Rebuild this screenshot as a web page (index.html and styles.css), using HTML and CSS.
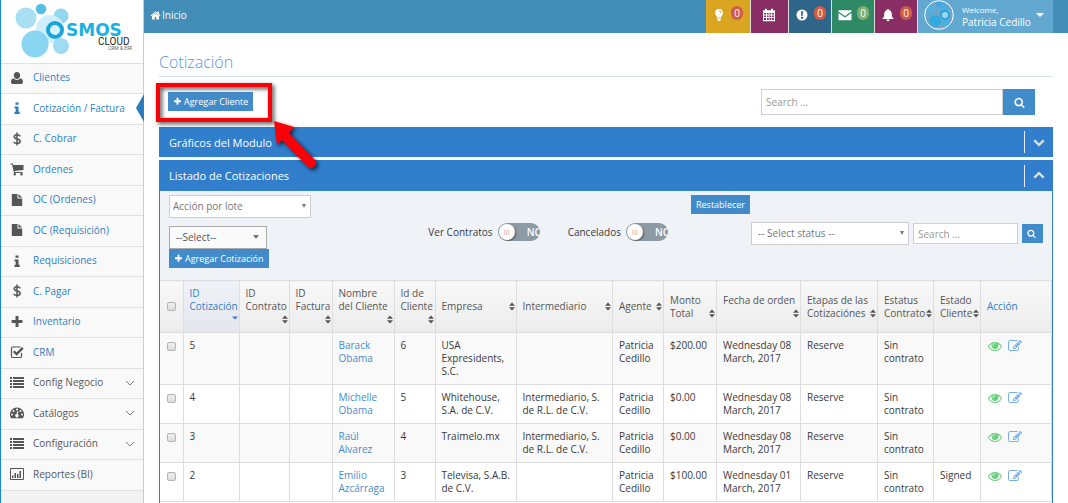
FILE: index.html
```html
<!DOCTYPE html>
<html lang="es">

<head>
  <meta charset="UTF-8">
  <meta name="viewport" content="width=device-width, initial-scale=1.0">
  <title>Cotización - Osmos Cloud</title>
  <link rel="stylesheet" href="styles.css">
</head>

<body>
  <svg class="sprite" aria-hidden="true">
    <symbol id="plus" viewBox="0 0 1792 1792"><path d="M1600 736v192q0 40-28 68t-68 28h-416v416q0 40-28 68t-68 28h-192q-40 0-68-28t-28-68v-416h-416q-40 0-68-28t-28-68v-192q0-40 28-68t68-28h416v-416q0-40 28-68t68-28h192q40 0 68 28t28 68v416h416q40 0 68 28t28 68z"/></symbol>
    <symbol id="search" viewBox="0 0 1792 1792"><path d="M1216 832q0-185-131.5-316.5t-316.5-131.5-316.5 131.5-131.5 316.5 131.5 316.5 316.5 131.5 316.5-131.5 131.5-316.5zm512 832q0 52-38 90t-90 38q-54 0-90-38l-343-342q-179 124-399 124-143 0-273.5-55.5t-225-150-150-225-55.5-273.5 55.5-273.5 150-225 225-150 273.5-55.5 273.5 55.5 225 150 150 225 55.5 273.5q0 220-124 399l343 343q37 37 37 90z"/></symbol>
    <symbol id="chevron" viewBox="0 0 1792 1792"><path d="M1683 808l-742 741q-19 19-45 19t-45-19l-742-741q-19-19-19-45.5t19-45.5l166-165q19-19 45-19t45 19l531 531 531-531q19-19 45-19t45 19l166 165q19 19 19 45.5t-19 45.5z"/></symbol>
    <symbol id="edit" viewBox="0 0 1792 1792"><path d="M888 1184l116-116-152-152-116 116v56h96v96h56zm440-720q-16-16-33 1l-350 350q-17 17-1 33t33-1l350-350q17-17 1-33zm80 594v190q0 119-84.5 203.5t-203.5 84.5h-832q-119 0-203.5-84.5t-84.5-203.5v-832q0-119 84.5-203.5t203.5-84.5h832q63 0 117 25 15 7 18 23 3 17-9 29l-49 49q-14 14-32 8-23-6-45-6h-832q-66 0-113 47t-47 113v832q0 66 47 113t113 47h832q66 0 113-47t47-113v-126q0-13 9-22l64-64q15-15 35-7t20 29zm-96-738l288 288-672 672h-288v-288zm444 132l-92 92-288-288 92-92q28-28 68-28t68 28l152 152q28 28 28 68t-28 68z"/></symbol>
    <symbol id="eye" viewBox="0 0 1792 1792"><path d="M1664 960q-152-236-381-353 61 104 61 225 0 185-131.5 316.5t-316.5 131.5-316.5-131.5-131.5-316.5q0-121 61-225-229 117-381 353 133 205 333.5 326.5t434.5 121.5 434.5-121.5 333.5-326.5zm-720-384q0-20-14-34t-34-14q-125 0-214.5 89.5t-89.5 214.5q0 20 14 34t34 14 34-14 14-34q0-86 61-147t147-61q20 0 34-14t14-34zm848 384q0 34-20 69-140 230-376.5 368.5t-499.5 138.5-499.5-139-376.5-368q-20-35-20-69t20-69q140-229 376.5-368t499.5-139 499.5 139 376.5 368q20 35 20 69z"/></symbol>
    <symbol id="home" viewBox="0 0 1792 1792"><path d="M1472 992v480q0 26-19 45t-45 19h-384v-384h-256v384h-384q-26 0-45-19t-19-45v-480q0-1 .5-3t.5-3l575-474 575 474q1 2 1 6zm223-69l-62 74q-8 9-21 11h-3q-13 0-21-7l-692-577-692 577q-12 8-24 7-13-2-21-11l-62-74q-8-10-7-23.5t11-21.5l719-599q32-26 76-26t76 26l244 204v-195q0-14 9-23t23-9h192q14 0 23 9t9 23v408l219 182q10 8 11 21.5t-7 23.5z"/></symbol>
    <symbol id="user" viewBox="0 0 14 14"><path d="M7 1c2 0 3.200 1.400 3.200 3.300S9 8 7 8 3.800 6.200 3.800 4.300 5 1 7 1zM3.600 7.300C4.600 8.400 5.700 9 7 9s2.400-.6 3.400-1.700c1.800.4 2.600 1.900 2.600 4 0 1-.8 1.700-1.800 1.700H2.800C1.800 13 1 12.300 1 11.300c0-2.100.8-3.600 2.600-4z"/></symbol>
    <symbol id="info" viewBox="0 0 14 14"><path d="M5.500 1.500h3v2.300h-3zM4.500 5.500h4v5.300h1.200V13H4.500v-2.200h1.200V7.500H4.500z"/></symbol>
    <symbol id="dollar" viewBox="0 0 14 14"><path d="M10.300 4.200C9.500 3.200 8.300 2.800 7 2.800c-1.700 0-2.800.8-2.800 2 0 3 6 1.400 6 4.500 0 1.300-1.200 2.100-3 2.100-1.500 0-2.700-.5-3.600-1.500M7 .5v13" fill="none" stroke="currentColor" stroke-width="1.500"/></symbol>
    <symbol id="cart" viewBox="0 0 14 14"><path d="M.5 1.500h2.300l.4 1.500h10.300v5L4.600 9l.2 1h7.700v1H4L2 2.500H.5z"/><circle cx="4.800" cy="12.300" r="1.200"/><circle cx="11.500" cy="12.300" r="1.200"/></symbol>
    <symbol id="file" viewBox="0 0 14 14"><path d="M1.800 1h5.700v4.500h4.700V13H1.800zM8.500 1l3.700 3.500H8.500z"/></symbol>
    <symbol id="check" viewBox="0 0 14 14"><path d="M11.500 8v3.200c0 .8-.6 1.300-1.300 1.300H2.800c-.8 0-1.300-.6-1.300-1.300V3.300c0-.8.6-1.300 1.300-1.300h7.700" fill="none" stroke="currentColor" stroke-width="1.200"/><path d="M3.800 6.300l2.800 2.800 6.200-6.200" fill="none" stroke="currentColor" stroke-width="2.300"/></symbol>
    <symbol id="list" viewBox="0 0 14 14"><path d="M0 1h2v2H0zM3 1h11v2H3zM0 4h2v2H0zM3 4h11v2H3zM0 7h2v2H0zM3 7h11v2H3zM0 10h2v2H0zM3 10h11v2H3z"/></symbol>
    <symbol id="gauge" viewBox="0 0 14 14"><path fill-rule="evenodd" d="M7 1.500a7 7 0 0 1 5.900 10.700H1.100A7 7 0 0 1 7 1.500zM7 2.500a1 1 0 1 0 0 2 1 1 0 0 0 0-2zM3.500 4a1 1 0 1 0 0 2 1 1 0 0 0 0-2zM10.500 4a1 1 0 1 0 0 2 1 1 0 0 0 0-2zM2 7.500a1 1 0 1 0 0 2 1 1 0 0 0 0-2zM12 7.500a1 1 0 1 0 0 2 1 1 0 0 0 0-2zM7.500 5l-1 3a1.700 1.700 0 1 0 1.300.2l.7-2.900z"/></symbol>
    <symbol id="chart" viewBox="0 0 14 14"><path d="M.5 1.500h13v11H.5z" fill="none" stroke="currentColor"/><path d="M2 8.500h1.500V11H2zM4.500 6H6v5H4.500zM7 7h1.500v4H7zM9.500 4H11v7H9.500z"/></symbol>
    <symbol id="bulb" viewBox="0 0 14 14"><path fill-rule="evenodd" d="M7 1a3.900 3.900 0 0 1 3.900 3.900c0 1.900-1.500 2.600-1.700 4H4.800c-.2-1.400-1.700-2.100-1.700-4A3.900 3.900 0 0 1 7 1zM7 2.600v1c.8 0 1.300.5 1.400 1.200h.9C9.300 3.500 8.300 2.600 7 2.600z"/><path d="M5 9.500h4v1.200H5zM5 11.300h4l-1 1.700H6z"/></symbol>
    <symbol id="calendar" viewBox="0 0 14 14"><path fill-rule="evenodd" d="M1 2.300h2V.8h2v1.500h4V.8h2v1.500h2V13.200H1zM2 5v1.500h2V5zM5 5v1.500h1.700V5zM7.500 5v1.500h1.700V5zM10 5v1.500h2V5zM2 7.500V9h2V7.500zM5 7.500V9h1.700V7.500zM7.500 7.500V9h1.700V7.500zM10 7.500V9h2V7.500zM2 10v2h2v-2zM5 10v2h1.700v-2zM7.500 10v2h1.700v-2zM10 10v2h2v-2z"/></symbol>
    <symbol id="alert" viewBox="0 0 14 14"><path fill-rule="evenodd" d="M7 1.500a5.500 5.500 0 1 1 0 11 5.500 5.500 0 0 1 0-11zM6 3.200l.3 4.700h1.400L8 3.200zM6 8.800v1.900h2V8.800z"/></symbol>
    <symbol id="mail" viewBox="0 0 14 14"><path d="M.5 2.300h13v1.200L7 8 .5 3.500zM.5 5L7 9.500 13.500 5v7.200H.5z"/></symbol>
    <symbol id="bell" viewBox="0 0 14 14"><path d="M6.300 1h1.400v1C10 2.500 10.800 4.200 10.800 6c0 2.700.8 4 2.200 5H1c1.400-1 2.200-2.300 2.200-5 0-1.800.8-3.500 3.100-4zM5.300 11.500h3.400a1.700 1.700 0 0 1-3.400 0z"/></symbol>
    <symbol id="sort" viewBox="0 0 6 8"><path d="M0 3.300L3 0l3 3.300zM0 4.700h6L3 8z"/></symbol>
    <symbol id="sort-down" viewBox="0 0 6 8"><path d="M0 1h6L3 4z"/></symbol>
  </svg>

  <div class="layout">
    <aside class="sidebar">
      <a class="logo" href="#" aria-label="Osmos Cloud">
        <svg width="118" height="58" viewBox="0 0 118 58">
          <circle cx="12" cy="15" r="10.500" fill="#a9dff3"/>
          <circle cx="27" cy="6" r="5.300" fill="#56bfe3"/>
          <circle cx="47" cy="13" r="7.500" fill="#93d8f0"/>
          <circle cx="36" cy="26" r="14" fill="#cdeefa"/>
          <circle cx="47" cy="43" r="8" fill="#9fdcf2"/>
          <circle cx="21" cy="41" r="13.500" fill="#7dd0ef" opacity=".9"/>
          <circle cx="41" cy="27" r="7" fill="#d9f2fb" stroke="#1ba4dc" stroke-width="4"/>
          <text class="logo-name" x="52" y="33">SMOS</text>
          <text class="logo-cloud" x="84" y="42">CLOUD</text>
          <text class="logo-small" x="94" y="47">CRM &amp; ERP</text>
        </svg>
      </a>
      <nav>
        <ul class="menu">
          <li><a href="#"><svg class="icon"><use href="#user"/></svg>Clientes</a></li>
          <li class="active"><a href="#"><svg class="icon"><use href="#info"/></svg>Cotización / Factura</a></li>
          <li><a href="#"><svg class="icon"><use href="#dollar"/></svg>C. Cobrar</a></li>
          <li><a href="#"><svg class="icon"><use href="#cart"/></svg>Ordenes</a></li>
          <li><a href="#"><svg class="icon"><use href="#file"/></svg>OC (Ordenes)</a></li>
          <li><a href="#"><svg class="icon"><use href="#file"/></svg>OC (Requisición)</a></li>
          <li><a href="#"><svg class="icon"><use href="#info"/></svg>Requisiciones</a></li>
          <li><a href="#"><svg class="icon"><use href="#dollar"/></svg>C. Pagar</a></li>
          <li><a href="#"><svg class="icon"><use href="#plus"/></svg>Inventario</a></li>
          <li><a href="#"><svg class="icon"><use href="#check"/></svg>CRM</a></li>
          <li class="group"><a href="#"><svg class="icon"><use href="#list"/></svg>Config Negocio<svg class="arrow" viewBox="0 0 10 10"><path d="M1 3l4 4 4-4"/></svg></a></li>
          <li class="group"><a href="#"><svg class="icon"><use href="#gauge"/></svg>Catálogos<svg class="arrow" viewBox="0 0 10 10"><path d="M1 3l4 4 4-4"/></svg></a></li>
          <li class="group"><a href="#"><svg class="icon"><use href="#list"/></svg>Configuración<svg class="arrow" viewBox="0 0 10 10"><path d="M1 3l4 4 4-4"/></svg></a></li>
          <li class="group"><a href="#"><svg class="icon"><use href="#chart"/></svg>Reportes (BI)</a></li>
        </ul>
      </nav>
    </aside>

    <div class="content">
      <header class="topbar">
        <a class="home" href="#"><svg><use href="#home"/></svg>Inicio</a>
        <div class="notices">
          <a class="notice yellow" href="#" aria-label="Ideas"><svg><use href="#bulb"/></svg><span class="badge">0</span></a>
          <a class="notice purple narrow" href="#" aria-label="Calendario"><svg><use href="#calendar"/></svg></a>
          <a class="notice blue" href="#" aria-label="Alertas"><svg><use href="#alert"/></svg><span class="badge">0</span></a>
          <a class="notice green" href="#" aria-label="Mensajes"><svg><use href="#mail"/></svg><span class="badge badge-green">0</span></a>
          <a class="notice purple" href="#" aria-label="Avisos"><svg><use href="#bell"/></svg><span class="badge">0</span></a>
          <a class="profile" href="#">
            <svg class="avatar" viewBox="0 0 30 30">
              <circle cx="15" cy="15" r="14" fill="#6fa5cb"/>
              <circle cx="6" cy="10" r="5" fill="#55aedb"/>
              <circle cx="15" cy="4" r="3" fill="#37a9dc"/>
              <circle cx="20" cy="9" r="5" fill="#4bade0"/>
              <circle cx="11" cy="21" r="6" fill="#35aade"/>
              <circle cx="22" cy="23" r="4" fill="#4bb0dd"/>
              <circle cx="21" cy="15" r="4" fill="#a4d7ef" stroke="#27a5dd" stroke-width="2"/>
              <circle cx="15" cy="15" r="14.300" fill="none" stroke="#fff" stroke-width="1"/>
            </svg>
            <span class="who"><small>Welcome,</small>Patricia Cedillo</span>
            <svg class="caret" viewBox="0 0 8 4"><path d="M0 0h8L4 4z"/></svg>
          </a>
        </div>
      </header>

      <main>
        <h1>Cotización</h1>

        <div class="actions">
          <div class="add-client">
            <button class="btn" type="button"><svg><use href="#plus"/></svg>Agregar Cliente</button>
            <svg class="callout" width="170" height="94" viewBox="0 0 170 94" aria-hidden="true">
              <rect x="4" y="4" width="112" height="35"/>
              <path d="M120 40l20 6-5 6 26 27a5 5 0 0 1-7 7l-26-27-5 5z"/>
            </svg>
          </div>
          <form class="search">
            <input type="text" placeholder="Search ..." aria-label="Buscar">
            <button type="button" aria-label="Buscar"><svg><use href="#search"/></svg></button>
          </form>
        </div>

        <section class="panel">
          <h2>Gráficos del Modulo<button class="toggle-panel" type="button" aria-label="Abrir"><svg><use href="#chevron"/></svg></button></h2>
        </section>

        <section class="panel open">
          <h2>Listado de Cotizaciones<button class="toggle-panel" type="button" aria-label="Cerrar"><svg><use href="#chevron"/></svg></button></h2>

          <div class="filters">
            <div class="batch">
              <span class="select"><select aria-label="Acción por lote"><option>Acción por lote</option></select></span>
              <span class="select select-type"><select aria-label="Tipo"><option>--Select--</option></select></span>
              <button class="btn" type="button"><svg><use href="#plus"/></svg>Agregar Cotización</button>
            </div>
            <div class="switches">
              <label class="switch">Ver Contratos<input type="checkbox"><span class="track"><i>III</i><b>NO</b></span></label>
              <label class="switch">Cancelados<input type="checkbox"><span class="track"><i>III</i><b>NO</b></span></label>
            </div>
            <div class="lookup">
              <button class="btn" type="button">Restablecer</button>
              <div class="lookup-row">
                <span class="select select-status"><select aria-label="Status"><option>-- Select status --</option></select></span>
                <input type="text" placeholder="Search ..." aria-label="Buscar cotización">
                <button class="btn btn-icon" type="button" aria-label="Buscar cotización"><svg><use href="#search"/></svg></button>
              </div>
            </div>
          </div>

          <table>
            <colgroup>
              <col class="w-check"><col class="w-quote"><col class="w-contract"><col class="w-bill"><col class="w-name"><col class="w-client"><col class="w-company"><col><col class="w-agent"><col class="w-amount"><col class="w-date"><col class="w-stage"><col class="w-status"><col class="w-state"><col class="w-action">
            </colgroup>
            <thead>
              <tr>
                <th class="check"><input type="checkbox" aria-label="Todos"></th>
                <th class="sorted">ID Cotización<svg><use href="#sort-down"/></svg></th>
                <th>ID Contrato<svg><use href="#sort"/></svg></th>
                <th>ID Factura<svg><use href="#sort"/></svg></th>
                <th>Nombre del Cliente<svg><use href="#sort"/></svg></th>
                <th>Id de Cliente<svg><use href="#sort"/></svg></th>
                <th>Empresa<svg><use href="#sort"/></svg></th>
                <th>Intermediario<svg><use href="#sort"/></svg></th>
                <th>Agente<svg><use href="#sort"/></svg></th>
                <th>Monto Total<svg><use href="#sort"/></svg></th>
                <th>Fecha de orden<svg><use href="#sort"/></svg></th>
                <th>Etapas de las Cotizaciónes<svg><use href="#sort"/></svg></th>
                <th>Estatus Contrato<svg><use href="#sort"/></svg></th>
                <th>Estado Cliente<svg><use href="#sort"/></svg></th>
                <th class="action">Acción</th>
              </tr>
            </thead>
            <tbody>
              <tr>
                <td class="check"><input type="checkbox" aria-label="Cotización 5"></td>
                <td>5</td><td></td><td></td>
                <td><a href="#">Barack Obama</a></td>
                <td>6</td>
                <td>USA Expresidents, S.C.</td>
                <td></td>
                <td>Patricia Cedillo</td>
                <td>$200.00</td>
                <td>Wednesday 08 March, 2017</td>
                <td>Reserve</td>
                <td>Sin contrato</td>
                <td></td>
                <td class="tools"><a class="view" href="#" aria-label="Ver"><svg><use href="#eye"/></svg></a><a class="edit" href="#" aria-label="Editar"><svg><use href="#edit"/></svg></a></td>
              </tr>
              <tr>
                <td class="check"><input type="checkbox" aria-label="Cotización 4"></td>
                <td>4</td><td></td><td></td>
                <td><a href="#">Michelle Obama</a></td>
                <td>5</td>
                <td>Whitehouse, S.A. de C.V.</td>
                <td>Intermediario, S. de R.L. de C.V.</td>
                <td>Patricia Cedillo</td>
                <td>$0.00</td>
                <td>Wednesday 08 March, 2017</td>
                <td>Reserve</td>
                <td>Sin contrato</td>
                <td></td>
                <td class="tools"><a class="view" href="#" aria-label="Ver"><svg><use href="#eye"/></svg></a><a class="edit" href="#" aria-label="Editar"><svg><use href="#edit"/></svg></a></td>
              </tr>
              <tr>
                <td class="check"><input type="checkbox" aria-label="Cotización 3"></td>
                <td>3</td><td></td><td></td>
                <td><a href="#">Raúl Alvarez</a></td>
                <td>4</td>
                <td>Traimelo.mx</td>
                <td>Intermediario, S. de R.L. de C.V.</td>
                <td>Patricia Cedillo</td>
                <td>$0.00</td>
                <td>Wednesday 08 March, 2017</td>
                <td>Reserve</td>
                <td>Sin contrato</td>
                <td></td>
                <td class="tools"><a class="view" href="#" aria-label="Ver"><svg><use href="#eye"/></svg></a><a class="edit" href="#" aria-label="Editar"><svg><use href="#edit"/></svg></a></td>
              </tr>
              <tr>
                <td class="check"><input type="checkbox" aria-label="Cotización 2"></td>
                <td>2</td><td></td><td></td>
                <td><a href="#">Emilio Azcárraga</a></td>
                <td>3</td>
                <td>Televisa, S.A.B. de C.V.</td>
                <td></td>
                <td>Patricia Cedillo</td>
                <td>$100.00</td>
                <td>Wednesday 01 March, 2017</td>
                <td>Reserve</td>
                <td>Sin contrato</td>
                <td>Signed</td>
                <td class="tools"><a class="view" href="#" aria-label="Ver"><svg><use href="#eye"/></svg></a><a class="edit" href="#" aria-label="Editar"><svg><use href="#edit"/></svg></a></td>
              </tr>
            </tbody>
          </table>
        </section>
      </main>
    </div>
  </div>
</body>

</html>
```
FILE: styles.css
```css
* {
  box-sizing: border-box;
}

body {
  margin: 0;
  font-family: 'Open Sans', sans-serif;
  font-size: 10px;
  line-height: 13px;
  color: #393939;
  background-color: #fff;
}

a {
  color: #4a8bcb;
  text-decoration: none;
}

svg {
  fill: currentColor;
  flex-shrink: 0;
}

button,
input,
select {
  font: inherit;
  border-radius: 0;
}

button {
  cursor: pointer;
}

.sprite {
  display: none;
}

.layout {
  display: flex;
  min-height: 100vh;
}

/* sidebar */
.sidebar {
  width: 144px;
  flex-shrink: 0;
  background-color: #f2f2f2;
  border-left: 1px solid #1c84d8;
  border-right: 1px solid #ccc;
}

.logo {
  display: block;
  height: 63px;
  padding: 3px 13px 0;
  background-color: #fff;
}

.logo-name {
  font: bold 17px 'DejaVu Sans', sans-serif;
  fill: #1bb0e4;
}

.logo-cloud {
  font: 10px Roboto, sans-serif;
  fill: #222;
}

.logo-small {
  font: 5px Roboto, sans-serif;
  fill: #666;
}

.menu {
  margin: 0;
  padding: 0;
  list-style: none;
  border-bottom: 1px solid #e0e0e0;
}

.menu li {
  height: 30px;
  border-top: 1px solid #e0e0e0;
  background-color: #f9f9f9;
}

.menu li:nth-child(even) {
  height: 31px;
}

.menu a {
  display: flex;
  align-items: center;
  gap: 9px;
  height: 100%;
  padding: 0 8px 2px 9px;
  font-weight: 500;
  color: #2f7fc4;
}

.menu .icon {
  width: 14px;
  height: 14px;
  color: #555;
}

.menu .group a {
  font-weight: 400;
  color: #585858;
}

.menu .arrow {
  width: 10px;
  height: 10px;
  margin-left: auto;
  fill: none;
  stroke: #777;
}

.menu .active {
  position: relative;
  background-color: #fff;
}

.menu .active .icon {
  color: #2b7dbc;
}

.menu .active::after {
  content: "";
  position: absolute;
  top: 0;
  right: -1px;
  border: 14px solid transparent;
  border-left-width: 0;
  border-right: 8px solid #2b7dbc;
}

/* top bar */
.content {
  flex: 1;
  min-width: 0;
  display: flex;
  flex-direction: column;
}

.topbar {
  display: flex;
  justify-content: space-between;
  height: 33px;
  padding: 0 15px 0 6px;
  background-color: #438eb9;
}

.home {
  display: flex;
  align-items: center;
  gap: 1px;
  padding-bottom: 2px;
  color: #fff;
}

.home svg {
  width: 11px;
  height: 11px;
}

.notices {
  display: flex;
}

.notice {
  display: flex;
  gap: 5px;
  width: 43px;
  padding: 8px 0 0 6px;
  border-left: 1px solid #ddd;
  color: #fff;
}

.notice:first-child {
  width: 44px;
  border-left: 0;
}

.notice svg {
  width: 14px;
  height: 14px;
}

.narrow {
  width: 38px;
  padding-left: 11px;
}

.yellow {
  background-color: #daa520;
}

.purple {
  background-color: #892e65;
}

.blue {
  background-color: #2e6589;
}

.green {
  background-color: #2e8965;
}

.badge {
  width: 12px;
  height: 14px;
  margin-top: -2px;
  border-radius: 7px;
  background-color: #d15b47;
  line-height: 14px;
  text-align: center;
}

.badge-green {
  background-color: #82af6f;
}

.profile {
  display: flex;
  gap: 8px;
  width: 136px;
  padding-left: 6px;
  border-left: 1px solid #ddd;
  background-color: #62a8d1;
  color: #fff;
}

.avatar {
  width: 30px;
  height: 30px;
}

.who {
  width: 66px;
  padding-top: 4px;
  line-height: 12px;
  white-space: nowrap;
}

.who small {
  display: block;
  font-size: 8px;
}

.caret {
  width: 8px;
  height: 4px;
  margin-top: 13px;
}

/* page */
main {
  flex: 1;
  display: flex;
  flex-direction: column;
  padding: 0 15px;
}

h1 {
  margin: 0;
  padding: 18px 0 3px;
  border-bottom: 1px solid #d5e3ef;
  font-size: 16px;
  font-weight: 300;
  line-height: 22px;
  color: #5a96e0;
}

.actions {
  display: flex;
  justify-content: space-between;
  align-items: flex-start;
  height: 50px;
  padding: 12px 18px 0 9px;
}

.add-client {
  position: relative;
  padding-top: 3px;
}

.btn {
  display: flex;
  align-items: center;
  gap: 2px;
  height: 19px;
  padding: 0 5px;
  border: 0;
  background-color: #428bca;
  font-size: 9px;
  font-weight: 500;
  color: #fff;
}

.btn svg {
  width: 9px;
  height: 9px;
}

.callout {
  position: absolute;
  top: -8px;
  left: -14px;
  fill: #fb0007;
  filter: drop-shadow(2px 2px 2px rgba(0, 0, 0, 0.7));
  pointer-events: none;
}

.callout rect {
  fill: none;
  stroke: #fb0007;
  stroke-width: 4px;
}

.search {
  display: flex;
  width: 274px;
}

input[type="text"] {
  flex: 1;
  min-width: 0;
  padding: 0 4px;
  border: 1px solid #d0d0d0;
  background-color: #fff;
  font-size: 10px;
  color: #555;
}

input::placeholder {
  color: #999;
}

.search button {
  display: flex;
  align-items: center;
  justify-content: center;
  width: 32px;
  height: 26px;
  border: 0;
  background-color: #428bca;
  color: #fff;
}

.search svg {
  width: 11px;
  height: 11px;
}

/* panels */
.panel {
  margin-bottom: 3px;
}

.panel h2 {
  display: flex;
  align-items: center;
  justify-content: space-between;
  height: 30px;
  margin: 0;
  padding-left: 10px;
  background-color: #307ecc;
  font-size: 11px;
  font-weight: 500;
  color: #fff;
}

.toggle-panel {
  display: flex;
  align-items: center;
  justify-content: center;
  width: 29px;
  height: 22px;
  padding: 0;
  border: 0;
  border-left: 1px solid #e3ecf6;
  background: none;
  color: #ddd;
}

.toggle-panel svg {
  width: 12px;
  height: 12px;
}

.open {
  flex: 1;
  margin-bottom: 0;
  border: 1px solid #307ecc;
  border-width: 0 1px;
}

.open h2 {
  height: 31px;
  padding-left: 9px;
}

.open .toggle-panel {
  width: 28px;
}

.open .toggle-panel svg {
  transform: rotate(180deg);
}

/* filters */
.filters {
  display: flex;
  height: 89px;
  padding: 4px 9px 0;
  background-color: #eff2f7;
}

.batch {
  width: 142px;
}

.select {
  position: relative;
  display: block;
  height: 23px;
}

.select select {
  appearance: none;
  width: 100%;
  height: 100%;
  padding: 0 3px;
  border: 1px solid #ccc;
  background-color: #fff;
  color: #777;
}

.select::after {
  content: "";
  position: absolute;
  top: 9px;
  right: 5px;
  border: 2px solid transparent;
  border-top: 4px solid #777;
  border-bottom: 0;
}

.select-type {
  width: 98px;
  margin-top: 8px;
}

.select-type select {
  padding: 0 6px;
  border-color: #aaa;
  background-color: #fafafa;
  color: #555;
}

.select-type::after {
  right: 8px;
  border-left-width: 3px;
  border-right-width: 3px;
}

.select-status select {
  padding: 0 6px;
}

.switches {
  flex: 1;
  display: flex;
  justify-content: flex-end;
  gap: 28px;
  padding: 28px 23px 0 0;
}

.switch {
  display: flex;
  align-items: center;
  gap: 5px;
  height: 18px;
}

.switch input {
  position: absolute;
  opacity: 0;
}

.track {
  display: flex;
  align-items: center;
  gap: 12px;
  width: 42px;
  height: 18px;
  padding: 1px;
  border-radius: 9px;
  background-color: #8b9aa3;
  overflow: hidden;
}

.track i {
  flex-shrink: 0;
  width: 16px;
  height: 16px;
  border-radius: 8px;
  background-color: #fff;
  box-shadow: 1px 1px 2px rgba(0, 0, 0, 0.4);
  font-size: 8px;
  font-style: normal;
  line-height: 15px;
  text-align: center;
  color: #e0a0a0;
}

.track b {
  font-weight: 600;
  color: #fff;
}

.lookup {
  width: 352px;
}

.lookup-row {
  display: flex;
  align-items: center;
  gap: 4px;
  padding: 8px 0 0 60px;
}

.lookup-row input[type="text"] {
  height: 21px;
}

.select-status {
  width: 158px;
}

.btn-icon {
  width: 21px;
}

/* table */
table {
  width: 100%;
  table-layout: fixed;
  border-collapse: collapse;
  background-color: #fff;
}

th,
td {
  border: 1px solid #ddd;
  padding: 6px 2px 6px 6px;
  text-align: left;
  vertical-align: top;
}

tr > :first-child {
  border-left: 0;
}

th {
  height: 52px;
  padding-right: 1px;
  vertical-align: middle;
  font-weight: 400;
  color: #555;
  background-image: linear-gradient(#f8f8f8, #ececec);
}

th svg {
  float: right;
  width: 6px;
  height: 13px;
  color: #555;
}

.sorted {
  background-image: linear-gradient(#eff3f8, #e3e7ed);
}

.sorted,
.sorted svg,
.action {
  color: #307ecc;
}

tbody tr:nth-child(odd) {
  background-color: #f9f9f9;
}

.check {
  padding-left: 7px;
}

.check input {
  appearance: none;
  display: block;
  width: 9px;
  height: 9px;
  margin: 3px 0;
  border: 1px solid #b5b5b5;
  border-radius: 2px;
  background-image: linear-gradient(#eee, #ddd);
}

.tools a {
  display: inline-block;
  height: 13px;
  margin-right: 6px;
}

.tools svg {
  display: block;
  width: 14px;
  height: 14px;
}

.tools .view {
  margin-left: 1px;
  color: #69d07d;
}

.tools .edit {
  color: #77aeea;
}

.w-check { width: 23px; }
.w-quote { width: 56px; }
.w-contract { width: 50px; }
.w-bill { width: 43px; }
.w-name { width: 62px; }
.w-client { width: 41px; }
.w-company { width: 81px; }
.w-agent { width: 51px; }
.w-amount { width: 53px; }
.w-date { width: 84px; }
.w-stage { width: 77px; }
.w-status { width: 56px; }
.w-state { width: 47px; }
.w-action { width: 71px; }
```
